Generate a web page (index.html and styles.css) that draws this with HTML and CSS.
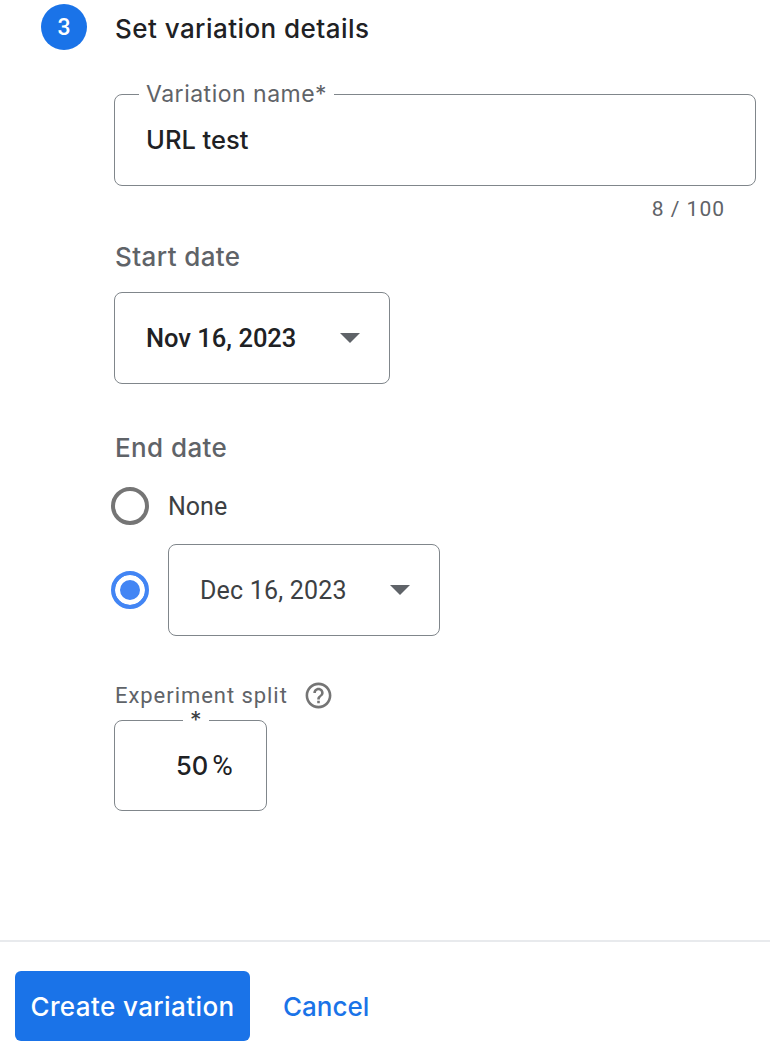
FILE: index.html
```html
<!DOCTYPE html>
<html lang="en">
<head>
  <meta charset="UTF-8">
  <title>Set variation details</title>
  <meta name="viewport" content="width=device-width, initial-scale=1.0">
  <link rel="stylesheet" href="styles.css">
</head>
<body>

<main class="step">
  <div class="step-header">
    <span class="step-number">3</span>
    <h2 class="step-title">Set variation details</h2>
  </div>

  <div class="step-body">
    <fieldset class="field name-field">
      <legend>Variation name*</legend>
      <div class="field-value">URL test</div>
    </fieldset>
    <div class="counter">8 / 100</div>

    <h3 class="group-label start-label">Start date</h3>
    <div class="select start-select">
      <span>Nov 16, 2023</span>
      <span class="arrow"></span>
    </div>

    <h3 class="group-label end-label">End date</h3>
    <div class="radio-row none-row">
      <span class="radio"></span>
      <span class="radio-text">None</span>
    </div>
    <div class="radio-row date-row">
      <span class="radio checked"></span>
      <div class="select end-select">
        <span>Dec 16, 2023</span>
        <span class="arrow"></span>
      </div>
    </div>

    <div class="split-label">
      <span>Experiment split</span>
      <svg class="help-icon" width="31" height="31" viewBox="0 0 24 24" fill="#757575">
        <path d="M11 18h2v-2h-2v2zm1-16C6.48 2 2 6.48 2 12s4.480 10 10 10 10-4.480 10-10S17.520 2 12 2zm0 18c-4.410 0-8-3.590-8-8s3.590-8 8-8 8 3.590 8 8-3.590 8-8 8zm0-14c-2.210 0-4 1.790-4 4h2c0-1.100.9-2 2-2s2 .9 2 2c0 2-3 1.750-3 5h2c0-2.250 3-2.500 3-5 0-2.210-1.790-4-4-4z"/>
      </svg>
    </div>
    <fieldset class="field split-field">
      <legend>*</legend>
      <div class="field-value">50<span class="percent">%</span></div>
    </fieldset>
  </div>
</main>

<footer class="actions">
  <button class="create-btn">Create variation</button>
  <button class="cancel-btn">Cancel</button>
</footer>

</body>
</html>
```

FILE: styles.css
```css
* {
  margin: 0;
  padding: 0;
  box-sizing: border-box;
  font-family: Roboto, Arial, sans-serif;
}

body {
  background: white;
  width: 770px;
  height: 1058px;
  display: flex;
  flex-direction: column;
  color: #202124;
  overflow: hidden;
}

.step {
  flex: 1;
  padding: 4px 14px 0 41px;
}

.step-header {
  display: flex;
  align-items: center;
  gap: 28px;
}

.step-number {
  width: 46px;
  height: 46px;
  border-radius: 50%;
  background: #1a73e8;
  color: white;
  font-size: 23px;
  font-weight: 500;
  display: flex;
  align-items: center;
  justify-content: center;
}

.step-title {
  font-family: Inter, sans-serif;
  font-size: 26px;
  font-weight: 500;
  letter-spacing: 0.45px;
  padding-top: 3px;
}

.step-body {
  padding-left: 73px;
}

.field {
  border: 1px solid #80868b;
  border-radius: 8px;
}

.field legend {
  font-family: Inter, sans-serif;
  color: #5f6368;
  font-size: 23px;
  letter-spacing: 0.5px;
  line-height: 24px;
  padding: 0 7px;
  margin-left: 24px;
}

.field-value {
  font-family: Inter, sans-serif;
  font-size: 25.5px;
  font-weight: 500;
}

.name-field {
  margin-top: 32px;
  width: 642px;
  height: 104px;
}

.name-field .field-value {
  padding: 18px 0 0 31px;
}

.counter {
  width: 611px;
  margin-top: 11px;
  text-align: right;
  font-size: 21px;
  line-height: 24px;
  color: #5f6368;
  letter-spacing: 1px;
}

.group-label {
  font-family: Inter, sans-serif;
  font-size: 26px;
  font-weight: 500;
  letter-spacing: 0.4px;
  line-height: 32px;
  color: #5f6368;
  padding-left: 1px;
}

.start-label {
  margin-top: 20px;
}

.select {
  border: 1px solid #80868b;
  border-radius: 8px;
  height: 92px;
  display: flex;
  align-items: center;
  justify-content: space-between;
  font-size: 25px;
}

.start-select {
  margin-top: 19px;
  width: 276px;
  padding: 0 29px 0 31px;
  font-family: Inter, sans-serif;
  font-size: 25.5px;
  font-weight: 500;
}

.end-select {
  width: 272px;
  padding: 0 29px 0 31px;
  color: #3c4043;
  letter-spacing: 0.2px;
}

.arrow {
  width: 0;
  height: 0;
  border-left: 10px solid transparent;
  border-right: 10px solid transparent;
  border-top: 10px solid #5f6368;
}

.end-label {
  margin-top: 48px;
}

.radio-row {
  display: flex;
  align-items: center;
  margin-left: -3px;
  gap: 19px;
}

.none-row {
  margin-top: 23px;
}

.date-row {
  margin-top: 19px;
}

.radio {
  width: 38px;
  height: 38px;
  border: 4px solid #757575;
  border-radius: 50%;
  flex-shrink: 0;
}

.radio.checked {
  border-color: #4285f4;
  background: #4285f4;
  box-shadow: inset 0 0 0 5px white;
}

.radio-text {
  font-size: 25px;
  color: #3c4043;
}

.split-label {
  margin-top: 44px;
  display: flex;
  align-items: center;
  gap: 15px;
  padding-left: 1px;
  font-size: 22px;
  color: #5f6368;
  letter-spacing: 0.95px;
}

.split-field {
  width: 153px;
  height: 103px;
  margin-top: -3px;
}

.split-field legend {
  margin-left: 68px;
  color: #3c4043;
  letter-spacing: 0;
}

.split-field .field-value {
  padding: 17px 0 0 61px;
}

.percent {
  margin-left: 4px;
  font-size: 28px;
  font-weight: 400;
}

.actions {
  height: 118px;
  border-top: 2px solid #e8eaed;
  padding: 29px 0 0 15px;
  display: flex;
  align-items: flex-start;
  gap: 33px;
}

.create-btn {
  width: 235px;
  height: 70px;
  background: #1a73e8;
  color: white;
  border: none;
  border-radius: 6px;
  font-family: Inter, sans-serif;
  font-size: 26px;
  font-weight: 500;
  letter-spacing: 0.4px;
}

.cancel-btn {
  height: 70px;
  background: none;
  border: none;
  color: #1a73e8;
  font-family: Inter, sans-serif;
  font-size: 26px;
  font-weight: 500;
}
```
